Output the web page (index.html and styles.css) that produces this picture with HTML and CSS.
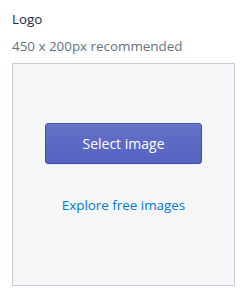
FILE: index.html
```html
<!DOCTYPE html>
<html>
<head>
<meta charset="utf-8">
<link rel="stylesheet" href="styles.css">
</head>
<body>
<div class="field">
  <div class="label">Logo</div>
  <div class="help">450 x 200px recommended</div>
  <div class="dropzone">
    <button class="btn">Select image</button>
    <a class="link" href="#">Explore free images</a>
  </div>
</div>
</body>
</html>
```
FILE: styles.css
```css
html, body {
  margin: 0;
  background: #fff;
}
body {
  font-family: "Open Sans", "Noto Sans", sans-serif;
  font-size: 13.4px;
  color: #212b36;
}
.field {
  padding: 9px 14px 0 12px;
  display: flex;
  flex-direction: column;
}
.label {
  line-height: 20px;
  height: 20px;
}
.help {
  color: #637381;
  line-height: 20px;
  margin-top: 7px;
}
.dropzone {
  margin-top: 7px;
  height: 223px;
  box-sizing: border-box;
  border: 1px solid #c4cdd5;
  background: #f4f6f8;
  display: flex;
  flex-direction: column;
  align-items: center;
  padding-top: 59px;
}
.btn {
  width: 157px;
  height: 41px;
  border: 1px solid #3f4eae;
  border-radius: 3px;
  background: linear-gradient(#6371c7, #5563c1);
  color: #fff;
  font-family: inherit;
  font-size: 14px;
  box-shadow: inset 0 1px 0 0 #6f7bcb, 0 1px 0 0 rgba(22,29,37,.05);
  padding: 0;
}
.link {
  margin-top: 31px;
  color: #007ace;
  text-decoration: none;
  font-size: 13.4px;
  line-height: 20px;
}
```
